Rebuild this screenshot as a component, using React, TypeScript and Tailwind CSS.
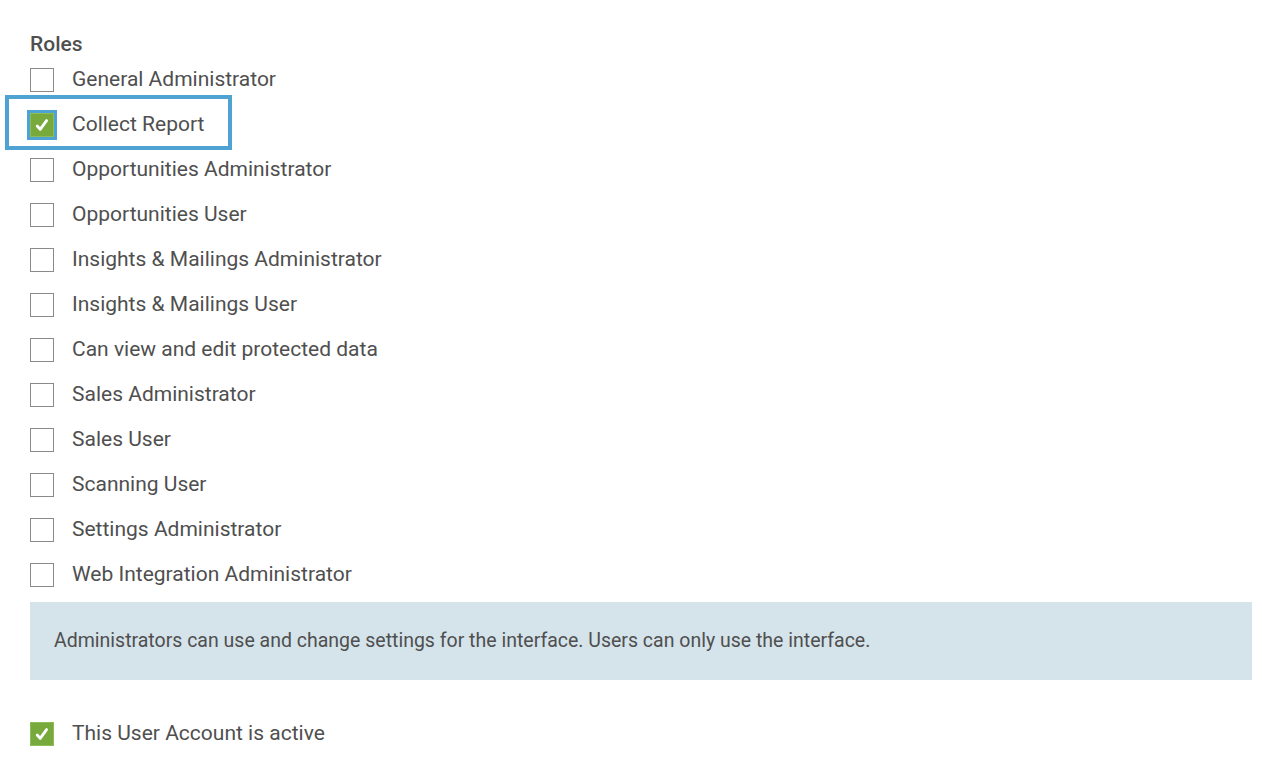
const roles = [
  { label: "General Administrator", checked: false },
  { label: "Collect Report", checked: true, focused: true },
  { label: "Opportunities Administrator", checked: false },
  { label: "Opportunities User", checked: false },
  { label: "Insights & Mailings Administrator", checked: false },
  { label: "Insights & Mailings User", checked: false },
  { label: "Can view and edit protected data", checked: false },
  { label: "Sales Administrator", checked: false },
  { label: "Sales User", checked: false },
  { label: "Scanning User", checked: false },
  { label: "Settings Administrator", checked: false },
  { label: "Web Integration Administrator", checked: false },
];

function Box({ checked, focused }: { checked: boolean; focused?: boolean }) {
  if (!checked) {
    return <span className="w-6 h-6 shrink-0 border border-[#8a8a8a] bg-white" />;
  }
  return (
    <span
      className={`w-6 h-6 shrink-0 flex items-center justify-center bg-[#77a93c] border border-[#8dbd55] ${
        focused ? "outline-[3px] outline-solid outline-[#4fa3d3]" : ""
      }`}
    >
      <svg width="16" height="16" viewBox="0 0 16 16" fill="none">
        <path
          d="M3.2 9 L6.2 12.4 L12.6 3.6"
          stroke="white"
          strokeWidth="2.8"
          strokeLinecap="round"
          strokeLinejoin="round"
        />
      </svg>
    </span>
  );
}

function Row({ label, checked, focused }: { label: string; checked: boolean; focused?: boolean }) {
  return (
    <label className="relative flex items-center h-[45px] gap-[18px] cursor-pointer">
      {focused && <span className="absolute left-[-25px] top-[-7px] w-[227px] h-[55px] border-4 border-[#4fa3d3]" />}
      <Box checked={checked} focused={focused} />
      <span className="text-[21px] text-[#4f4f4f]">{label}</span>
    </label>
  );
}

export default function App() {
  return (
    <div className="min-h-screen bg-white pl-[30px] pr-[10px] pt-[31px] font-['Roboto','Liberation_Sans',sans-serif]">
      <h2 className="text-[21px] leading-[26px] font-medium text-[#4f4f4f]">Roles</h2>

      <div className="flex flex-col">
        {roles.map((r) => (
          <Row key={r.label} {...r} />
        ))}
      </div>

      <div className="mt-[5px] h-[78px] flex items-center px-6 bg-[#d5e3ea]">
        <p className="text-[19.5px] text-[#4f4f4f]">
          Administrators can use and change settings for the interface. Users can only use the interface.
        </p>
      </div>

      <div className="mt-[31px]">
        <Row label="This User Account is active" checked />
      </div>
    </div>
  );
}
